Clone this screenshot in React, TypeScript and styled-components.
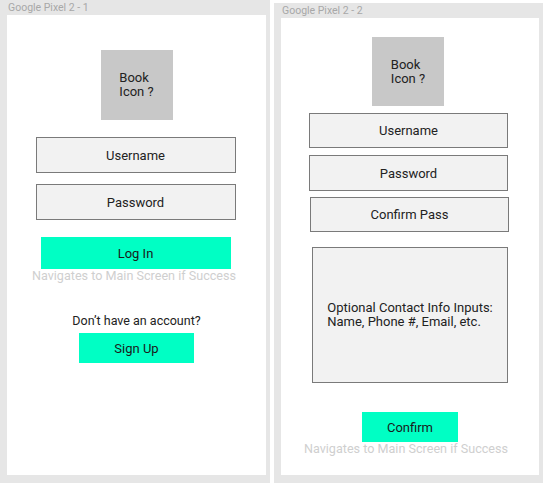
import styled, { createGlobalStyle } from 'styled-components'

const GlobalStyle = createGlobalStyle`
    html, body {
        margin: 0;
        padding: 0;
        background: #fff;
    }
    body {
        font-family: Roboto, "Liberation Sans", sans-serif;
        color: #222;
    }
`

const Board = styled.div`
    display: flex;
    gap: 4px;
    width: 548px;
    height: 483px;
    overflow: hidden;
`

const Frame = styled.div<{ offset: number; width: number }>`
    display: flex;
    flex-direction: column;
    width: ${props => props.width}px;
    margin-top: ${props => props.offset}px;
    height: ${props => 483 - props.offset}px;
    background: #e6e6e6;
    padding: 0 4px 8px 7px;
    box-sizing: border-box;
`

const FrameTitle = styled.div`
    height: 15px;
    line-height: 15px;
    font-size: 10.5px;
    color: #a8a8a8;
    padding-left: 1px;
`

const Screen = styled.div<{ top: number }>`
    flex: 1;
    background: #fff;
    display: flex;
    flex-direction: column;
    align-items: center;
    padding-top: ${props => props.top}px;
`

// shift moves the centre of an item sideways by that many px
const IconBox = styled.div<{ h: number; shift?: number }>`
    width: 72px;
    height: ${props => props.h}px;
    margin-left: ${props => (props.shift || 0) * 2}px;
    background: #c8c8c8;
    display: flex;
    align-items: center;
    justify-content: center;
    font-size: 13px;
    line-height: 14px;
    color: #222;
    flex-shrink: 0;
`

const Field = styled.div<{ w: number; h: number; gap: number; shift?: number }>`
    width: ${props => props.w}px;
    height: ${props => props.h}px;
    margin-top: ${props => props.gap}px;
    margin-left: ${props => (props.shift || 0) * 2}px;
    box-sizing: border-box;
    border: 1px solid #7a7a7a;
    background: #f2f2f2;
    display: flex;
    align-items: center;
    justify-content: center;
    font-size: 13px;
    color: #222;
    flex-shrink: 0;
`

const Action = styled.div<{ w: number; h: number; gap: number; shift?: number }>`
    width: ${props => props.w}px;
    height: ${props => props.h}px;
    margin-top: ${props => props.gap}px;
    margin-left: ${props => (props.shift || 0) * 2}px;
    background: #00ffc4;
    display: flex;
    align-items: center;
    justify-content: center;
    font-size: 13px;
    color: #1a1a1a;
    flex-shrink: 0;
`

const Hint = styled.div<{ shift?: number }>`
    margin-left: ${props => (props.shift || 0) * 2}px;
    font-size: 12.6px;
    line-height: 14px;
    color: #cfcfcf;
    white-space: nowrap;
`

const Prompt = styled.div`
    margin-top: 30px;
    font-size: 12.5px;
    line-height: 15px;
    color: #222;
`

const Lines = styled.div`
    text-align: left;
`

export default function App () {
    return (
        <>
            <GlobalStyle />
            <Board>
                <Frame offset={0} width={270}>
                    <FrameTitle>Google Pixel 2 - 1</FrameTitle>
                    <Screen top={35}>
                        <IconBox h={70}><Lines>Book<br />Icon ?</Lines></IconBox>
                        <Field w={200} h={36} gap={17} shift={-1}>Username</Field>
                        <Field w={200} h={36} gap={11} shift={-1}>Password</Field>
                        <Action w={190} h={32} gap={17} shift={-1}>Log In</Action>
                        <Hint shift={-2.5}>Navigates to Main Screen if Success</Hint>
                        <Prompt>Don’t have an account?</Prompt>
                        <Action w={115} h={30} gap={5}>Sign Up</Action>
                    </Screen>
                </Frame>
                <Frame offset={3} width={269}>
                    <FrameTitle>Google Pixel 2 - 2</FrameTitle>
                    <Screen top={19}>
                        <IconBox h={69} shift={-2}><Lines>Book<br />Icon ?</Lines></IconBox>
                        <Field w={199} h={35} gap={7} shift={-1.5}>Username</Field>
                        <Field w={199} h={36} gap={7} shift={-1.5}>Password</Field>
                        <Field w={199} h={35} gap={6} shift={-0.5}>Confirm Pass</Field>
                        <Field w={196} h={136} gap={15}>
                            <Lines style={{ lineHeight: '14px' }}>Optional Contact Info Inputs:<br />Name, Phone #, Email, etc.</Lines>
                        </Field>
                        <Action w={96} h={30} gap={29}>Confirm</Action>
                        <Hint shift={-4}>Navigates to Main Screen if Success</Hint>
                    </Screen>
                </Frame>
            </Board>
        </>
    )
}
